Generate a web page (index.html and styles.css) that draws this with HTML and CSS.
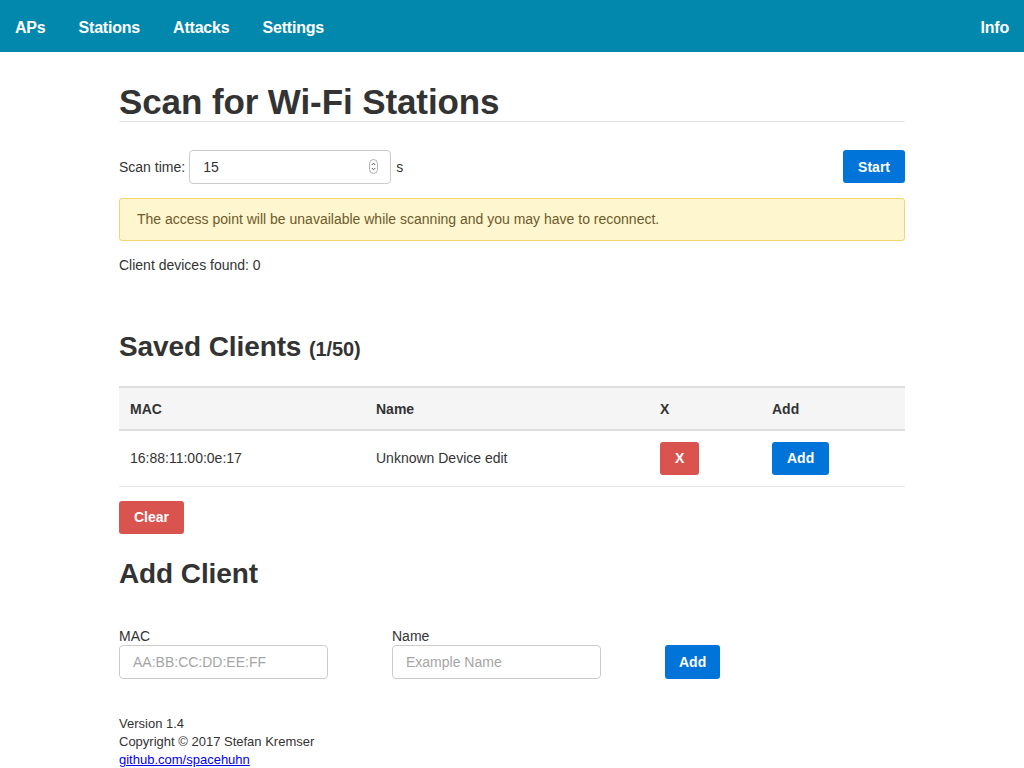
FILE: index.html
```html
<!DOCTYPE html>
<html lang="en">
<head>
<meta charset="utf-8">
<title>Stations</title>
<link rel="stylesheet" href="styles.css">
</head>
<body>
<nav class="nav">
  <div class="nav-left">
    <a class="nav-link" href="#">APs</a>
    <a class="nav-link" href="#">Stations</a>
    <a class="nav-link" href="#">Attacks</a>
    <a class="nav-link" href="#">Settings</a>
  </div>
  <a class="nav-link" href="#">Info</a>
</nav>
<main class="container">
  <h1 class="title">Scan for Wi-Fi Stations</h1>
  <div class="scan-row">
    <div class="scan-left">
      <label class="scan-label">Scan time:</label>
      <div class="num-wrap">
        <input class="input num" type="text" value="15">
        <span class="spinner"><svg width="9" height="15" viewBox="0 0 9 15"><rect x="0.5" y="0.5" width="8" height="14" rx="4" fill="#fafafa" stroke="#b5b5b5"/><path d="M2.8 6 L4.5 4.2 L6.2 6" fill="none" stroke="#555" stroke-width="0.9"/><path d="M2.8 9 L4.5 10.8 L6.2 9" fill="none" stroke="#555" stroke-width="0.9"/></svg></span>
      </div>
      <span class="unit">s</span>
    </div>
    <button class="btn btn-blue start">Start</button>
  </div>
  <div class="alert">The access point will be unavailable while scanning and you may have to reconnect.</div>
  <p class="found">Client devices found: 0</p>

  <h2 class="h2 saved">Saved Clients <small class="count">(1/50)</small></h2>
  <table class="table">
    <thead>
      <tr>
        <th class="c-mac">MAC</th>
        <th class="c-name">Name</th>
        <th class="c-x">X</th>
        <th class="c-add">Add</th>
      </tr>
    </thead>
    <tbody>
      <tr>
        <td>16:88:11:00:0e:17</td>
        <td>Unknown Device edit</td>
        <td><button class="btn btn-red">X</button></td>
        <td><button class="btn btn-blue">Add</button></td>
      </tr>
    </tbody>
  </table>
  <button class="btn btn-red clear">Clear</button>

  <h2 class="h2 addc">Add Client</h2>
  <div class="add-row">
    <div class="field">
      <label class="field-label">MAC</label>
      <input class="input field-input" type="text" placeholder="AA:BB:CC:DD:EE:FF">
    </div>
    <div class="field">
      <label class="field-label">Name</label>
      <input class="input field-input" type="text" placeholder="Example Name">
    </div>
    <button class="btn btn-blue btn-tall">Add</button>
  </div>

  <footer class="footer">
    <div>Version 1.4</div>
    <div>Copyright © 2017 Stefan Kremser</div>
    <div><a class="gh" href="#">github.com/spacehuhn</a></div>
  </footer>
</main>
</body>
</html>
```
FILE: styles.css
```css
* { box-sizing: border-box; }
html, body { margin: 0; padding: 0; }
body {
  font-family: "Liberation Sans", Arial, Helvetica, sans-serif;
  font-size: 14px;
  color: #333;
  background: #fff;
}
.nav {
  height: 52px;
  background: #0288ad;
  display: flex;
  align-items: center;
  justify-content: space-between;
  padding: 3px 15px 0;
}
.nav-left { display: flex; gap: 33px; }
.nav-link {
  color: #fff;
  text-decoration: none;
  font-weight: bold;
  font-size: 16px;
  letter-spacing: -0.2px;
}
.container {
  width: 786px;
  margin: 0 auto;
}
.title {
  font-size: 35px;
  font-weight: bold;
  margin: 30px 0 0;
  line-height: 39px;
  padding-bottom: 0;
  border-bottom: 1px solid #e3e3e3;
  letter-spacing: -0.1px;
}
.scan-row {
  display: flex;
  justify-content: space-between;
  align-items: flex-start;
  margin-top: 28px;
}
.scan-left { display: flex; align-items: center; }
.scan-label { margin-right: 4px; }
.num-wrap { position: relative; }
.input {
  font-family: "Liberation Sans", Arial, Helvetica, sans-serif;
  font-size: 14px;
  color: #333;
  height: 34px;
  border: 1px solid #ccc;
  border-radius: 4px;
  padding: 0 13px;
  background: #fff;
  outline: none;
}
.input::placeholder { color: #a5a5a5; }
.num { width: 202px; display: block; }
.spinner {
  position: absolute;
  right: 13px;
  top: 9px;
  line-height: 0;
}
.unit { margin-left: 5px; }
.btn {
  font-family: "Liberation Sans", Arial, Helvetica, sans-serif;
  font-size: 14px;
  font-weight: bold;
  color: #fff;
  border: none;
  border-radius: 3px;
  height: 33px;
  padding: 0 15px;
  cursor: pointer;
}
.btn-blue { background: #0074d9; }
.btn-red { background: #d9534f; }
.btn-tall { height: 34px; padding: 0 14px; }
.alert {
  margin-top: 14px;
  background: #fdf6ce;
  border: 1px solid #f1d56d;
  border-radius: 3px;
  color: #6e5a2c;
  padding: 12px 17px;
  line-height: 17px;
}
.found {
  margin: 16px 0 0;
  line-height: 16px;
}
.h2 {
  font-size: 28px;
  font-weight: bold;
  margin: 0;
  line-height: 32px;
  letter-spacing: -0.1px;
}
.saved { margin-top: 58px; }
.count { font-size: 20px; }
.table {
  width: 100%;
  border-collapse: collapse;
  margin-top: 21px;
}
.table th {
  text-align: left;
  font-weight: bold;
  background: #f5f5f5;
  border-top: 2px solid #dedede;
  border-bottom: 2px solid #dedede;
  height: 43px;
  padding: 0 11px;
}
.table td {
  height: 56px;
  padding: 0 11px;
  border-bottom: 1px solid #e6e6e6;
}
.c-mac { width: 246px; }
.c-name { width: 284px; }
.c-x { width: 112px; }
.clear { display: block; margin-top: 14px; }
.addc { margin-top: 24px; }
.add-row {
  display: flex;
  align-items: flex-end;
  gap: 64px;
  margin-top: 38px;
}
.field { display: flex; flex-direction: column; }
.field-label { line-height: 16px; margin-bottom: 1px; }
.field-input { width: 209px; }
.footer {
  margin-top: 36px;
  font-size: 13px;
  line-height: 18px;
}
.gh { color: #0000ee; }
```
